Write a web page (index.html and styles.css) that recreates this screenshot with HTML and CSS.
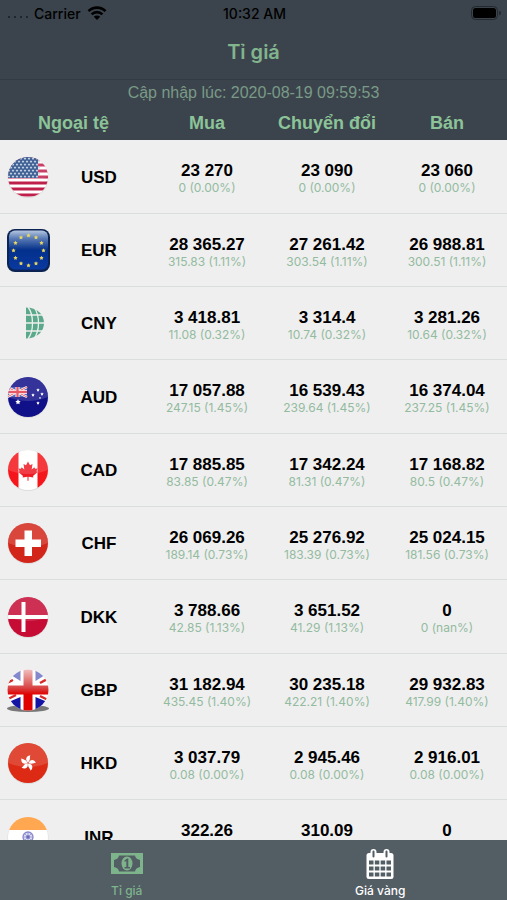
FILE: index.html
```html
<!DOCTYPE html>
<html lang="vi">
<head>
    <meta charset="UTF-8">
    <meta name="viewport" content="width=device-width, initial-scale=1">
    <title>Tỉ giá</title>
    <link rel="stylesheet" href="styles.css">
</head>
<body>

<div class="app">
    <header class="top">
        <div class="status-bar">
            <div class="carrier">
                <span class="dots"><i></i><i></i><i></i><i></i></span>
                <span>Carrier</span>
                <svg class="wifi" viewBox="0 0 20 14">
                    <path d="M1.500 5.200a12 12 0 0 1 17 0M4.600 8.400a7.600 7.600 0 0 1 10.800 0" fill="none" stroke="#000" stroke-width="2.600"/>
                    <path d="M10 14L6.800 10.800a4.600 4.600 0 0 1 6.400 0z"/>
                </svg>
            </div>
            <div class="time">10:32 AM</div>
            <svg class="battery" viewBox="0 0 30 14">
                <rect x="0.5" y="0.5" width="26" height="13" rx="4" fill="none" stroke="#23292d"/>
                <rect x="2" y="2" width="23" height="10" rx="2.500"/>
                <path d="M28 5a2 2 0 0 1 0 4z" fill="#23292d"/>
            </svg>
        </div>
        <h1>Tỉ giá</h1>
        <p class="updated">Cập nhập lúc: 2020-08-19 09:59:53</p>
    </header>

    <main>
        <table>
            <colgroup>
                <col class="col-flag">
                <col class="col-code">
                <col><col><col>
            </colgroup>
            <thead>
                <tr>
                    <th colspan="2">Ngoại tệ</th>
                    <th>Mua</th>
                    <th>Chuyển đổi</th>
                    <th>Bán</th>
                </tr>
            </thead>
            <tbody id="rates">
                <!-- Rates will be loaded here -->
            </tbody>
        </table>
    </main>

    <nav class="tabs">
        <a href="#rates" class="active">
            <svg viewBox="0 0 32 32">
                <path fill="#7eb48c" fill-rule="evenodd" d="M0 5h32v21H0zM3 7.500v16h26v-16z"/>
                <path fill="#7eb48c" d="M2 7h6q0 4-5 5H2zM30 7h-6q0 4 5 5h1zM2 24h6q0-4-5-5H2zM30 24h-6q0-4 5-5h1z"/>
                <ellipse cx="16" cy="15.500" rx="5.500" ry="7" fill="#7eb48c"/>
                <path d="M13.500 12.500l2.500-2h1.300v8.500h1.700v1.600h-5.500V19h1.800v-6l-1.800 1z" fill="#535d64"/>
            </svg>
            <span>Tỉ giá</span>
        </a>
        <a href="#gold">
            <svg viewBox="0 0 32 32">
                <rect x="2.500" y="5" width="27" height="26" rx="2.500" fill="#fff"/>
                <rect x="6.500" y="1" width="6" height="9" rx="3" fill="#fff"/>
                <rect x="19.500" y="1" width="6" height="9" rx="3" fill="#fff"/>
                <path d="M9.500 3.500v5M22.500 3.500v5" stroke="#535d64" stroke-width="2" stroke-linecap="round"/>
                <path d="M5 13.500h22M5 19.500h22M5 25.500h22" stroke="#535d64" stroke-width="4" stroke-dasharray="4.500 1.330" transform="translate(0 1)"/>
            </svg>
            <span>Giá vàng</span>
        </a>
    </nav>
</div>

<script src="script.js"></script>
</body>
</html>
```
FILE: styles.css
```css
* {
    box-sizing: border-box;
}
body {
    margin: 0;
    font-family: "Liberation Sans", Arial, sans-serif;
    background-color: #efefef;
    color: #000;
}
.app {
    display: flex;
    flex-direction: column;
    height: 100vh;
}

/* Header */
.top {
    background-color: #3b444c;
    text-align: center;
}
.status-bar {
    display: grid;
    grid-template-columns: 1fr auto 1fr;
    align-items: center;
    height: 26px;
    padding: 0 6px 0 8px;
    font-family: Inter, sans-serif;
    font-size: 14px;
    font-weight: 500;
}
.carrier {
    display: flex;
    align-items: center;
    gap: 6px;
}
.dots {
    display: flex;
    gap: 4px;
    padding-top: 8px;
}
.dots i {
    width: 2px;
    height: 2px;
    background-color: #20272c;
}
.wifi {
    width: 20px;
    height: 14px;
}
.battery {
    width: 30px;
    height: 14px;
    justify-self: end;
}
h1 {
    margin: 0;
    height: 54px;
    line-height: 52px;
    border-bottom: 1px solid #333b42;
    font-family: Inter, sans-serif;
    font-size: 20px;
    font-weight: 600;
    color: #82b48e;
}
.updated {
    margin: 0;
    line-height: 26px;
    font-size: 16px;
    color: #7a9a87;
}

/* Rates table */
main {
    flex: 1;
    min-height: 0;
    overflow-y: auto;
    scrollbar-width: none;
}
table {
    width: 100%;
    table-layout: fixed;
    border-collapse: separate;
    border-spacing: 0;
    text-align: center;
}
.col-flag {
    width: 10%;
}
.col-code {
    width: 19%;
}
th, td {
    padding: 0;
}
thead th {
    position: sticky;
    top: 0;
    z-index: 1;
    height: 34px;
    background-color: #3b444c;
    font-size: 18px;
    color: #8cc398;
}
tbody th, tbody td {
    height: 73px;
    padding-top: 5px;
    border-bottom: 1px solid #d9dddd;
}
tbody tr:nth-child(3n + 1) > * {
    height: 74px;
}
tbody th {
    padding-top: 2px;
    font-size: 17px;
}
tbody .flag {
    padding-top: 0;
}
.flag svg {
    display: block;
    width: 44px;
    height: 44px;
    margin-left: 6px;
}
.price, .change {
    display: block;
    height: 17px;
    line-height: 17px;
    white-space: nowrap;
}
.price {
    font-size: 17px;
    font-weight: bold;
}
.change {
    font-family: Inter, sans-serif;
    font-size: 12px;
    color: #93bb9f;
}

/* Bottom tabs */
.tabs {
    display: flex;
    height: 60px;
    background-color: #535d64;
}
.tabs a {
    flex: 1;
    display: flex;
    flex-direction: column;
    align-items: center;
    padding-top: 8px;
    gap: 3px;
    font-family: Inter, sans-serif;
    font-size: 12px;
    font-weight: 500;
    line-height: 16px;
    color: #fff;
    text-decoration: none;
}
.tabs a.active {
    color: #7eb48c;
}
.tabs svg {
    width: 32px;
    height: 32px;
}
```
FILE: script.js
```js
// Every flag is drawn on a 44x44 box
const round = '<circle cx="22" cy="22.500" r="20.500" fill="#ddd"/>';
const gloss = '<path d="M2 22a20 20 0 0 1 40 0q-20 8-40 0z" fill="#fff" fill-opacity=".15"/>';

function disc(id, inner) {
    return `<svg viewBox="0 0 44 44"><clipPath id="${id}"><circle cx="22" cy="22" r="20"/></clipPath>${round}<g clip-path="url(#${id})">${inner}${gloss}</g></svg>`;
}

function star(x, y, r, color) {
    let points = "";
    for (let i = 0; i < 10; i++) {
        const a = -Math.PI / 2 + i * Math.PI / 5;
        const d = i % 2 ? r * 0.5 : r;
        points += (x + d * Math.cos(a)).toFixed(2) + "," + (y + d * Math.sin(a)).toFixed(2) + " ";
    }
    return `<polygon points="${points}" fill="${color}"/>`;
}

function usFlag() {
    let s = '<rect width="44" height="44" fill="#fff"/>';
    for (let y = 2.500; y < 44; y += 6) {
        s += `<rect y="${y}" width="44" height="3" fill="#bf1f4b"/>`;
    }
    s += '<rect width="32" height="23" fill="#1d4380"/>';
    for (let row = 0; row < 7; row++) {
        for (let col = 0; col < 8; col++) {
            s += star(3 + col * 4 + (row % 2) * 2, 3.500 + row * 3, 1.500, "#c9d6e8");
        }
    }
    return disc("us", s);
}

function euFlag() {
    let s = '<defs><linearGradient id="euSky" x2="0" y2="1"><stop offset="0" stop-color="#b5c6e0"/><stop offset=".2" stop-color="#5b7cb6"/><stop offset=".45" stop-color="#123c90"/><stop offset=".5" stop-color="#03308c"/><stop offset="1" stop-color="#0a39a0"/></linearGradient></defs>';
    s += '<rect x="1" y="1" width="43" height="43" rx="8" fill="#0b2454"/><rect x="3" y="2.500" width="39" height="39" rx="6" fill="url(#euSky)"/>';
    for (let i = 0; i < 12; i++) {
        const a = i * Math.PI / 6;
        s += star(22.500 + 15 * Math.sin(a), 22.500 - 15 * Math.cos(a), 2.300, "#e9d75e");
    }
    return `<svg viewBox="0 0 44 44">${s}</svg>`;
}

function hkFlag() {
    let s = '<rect width="44" height="44" fill="#dc2a14"/>';
    for (let i = 0; i < 5; i++) {
        s += `<path d="M22 21.500c-3.500-2-3.500-6 1-7.500-.8 2 1.500 4-1 7.500z" fill="#fff" transform="rotate(${i * 72 + 10} 22 22)"/>`;
    }
    return disc("hk", s);
}

const flags = {
    USD: usFlag(),
    EUR: euFlag(),
    CNY: '<svg viewBox="0 0 44 44"><path d="M20 6.500c11 0 18 7 18 15.500s-7 15.500-18 15.500z" fill="#5aa98b"/><path d="M20 14h18M20 22h19M20 30h18M22 6c6 8 6 24 0 32M28 6c6 9 6 23 0 32" fill="none" stroke="#efefef" stroke-width="1.300"/></svg>',
    AUD: disc("au", '<rect width="44" height="44" fill="#101088"/><rect x="1" y="12" width="20" height="10" fill="#3c4aa8"/><path d="M1 12l20 10M21 12L1 22" stroke="#fff" stroke-width="2.500"/><path d="M1 12l20 10M21 12L1 22" stroke="#e44" stroke-width="1"/><path d="M11.500 12v10M1 17h20" stroke="#fff" stroke-width="4"/><path d="M11.500 12v10M1 17h20" stroke="#e23d4b" stroke-width="2.300"/>'
        + star(12, 27, 2.800, "#fff") + star(32, 15, 1.800, "#fff") + star(27, 20, 1.800, "#fff") + star(36, 19, 1.800, "#fff") + star(32, 28, 1.800, "#fff") + star(34, 23, 1.200, "#fff")),
    CAD: disc("ca", '<rect width="44" height="44" fill="#fff"/><path d="M0 0h12.500v44H0zM31.500 0H44v44H31.500z" fill="#f4161a"/><path d="M22 13.500l2 3.800 2.500-1.300-.8 5.500 2.700-2.300.6 1.600 2.500-.3-1 2.800 1.200.8-4.700 3.800.4 1.600-4.900-.7v4h-1v-4l-4.900.7.4-1.600-4.700-3.800 1.200-.8-1-2.800 2.500.3.600-1.600 2.700 2.300-.8-5.500 2.500 1.300z" fill="#ee1c25"/>'),
    CHF: disc("ch", '<rect width="44" height="44" fill="#d3261b"/><path d="M18.500 9.500h7.500v9h9V26h-9v9h-7.500v-9h-9v-7.500h9z" fill="#fff"/>'),
    DKK: disc("dk", '<rect width="44" height="44" fill="#c60c35"/><path d="M17.500 7v30M0 22h44" stroke="#fff" stroke-width="4"/>'),
    GBP: '<svg viewBox="0 0 44 44"><defs><clipPath id="gb"><circle cx="22" cy="22" r="20.500"/></clipPath><linearGradient id="gbRed" x2="0" y2="1"><stop offset="0" stop-color="#f3c8c8"/><stop offset=".45" stop-color="#d84444"/><stop offset=".6" stop-color="#e00000"/><stop offset="1" stop-color="#e00000"/></linearGradient></defs><ellipse cx="22" cy="40.500" rx="21" ry="3.500" fill="#777"/><g clip-path="url(#gb)"><rect width="44" height="44" fill="#fff"/><path d="M5 7L14.500 0v13zM39 7L29.500 0v13z" fill="#8388cc"/><path d="M5 33l9.500-4v15H5zM39 33l-9.500-4v15H39z" fill="#1414a4"/><path d="M1 15l6-3M43 10l-9 5M2 31l8-4M42 32l-8-4" stroke="#d82a2a" stroke-width="2.500"/><path d="M17.500 0h9v17.500H44v9H26.500V44h-9V26.500H0v-9h17.500z" fill="url(#gbRed)"/></g></svg>',
    HKD: hkFlag(),
    INR: disc("in", '<rect width="44" height="44" fill="#fff"/><rect width="44" height="15" fill="#ff9833"/><rect y="29" width="44" height="15" fill="#128807"/><circle cx="22" cy="22" r="5" fill="#d9d9f2" stroke="#7474c4" stroke-width="1.300"/><path d="M22 17v10M17 22h10M18.500 18.500l7 7M25.500 18.500l-7 7" stroke="#7474c4" stroke-width=".7"/><circle cx="22" cy="22" r="1.800" fill="#5050b0"/>')
};

// code, then price and change for Mua, Chuyển đổi, Bán
const rates = [
    ["USD", "23 270", "0 (0.00%)", "23 090", "0 (0.00%)", "23 060", "0 (0.00%)"],
    ["EUR", "28 365.27", "315.83 (1.11%)", "27 261.42", "303.54 (1.11%)", "26 988.81", "300.51 (1.11%)"],
    ["CNY", "3 418.81", "11.08 (0.32%)", "3 314.4", "10.74 (0.32%)", "3 281.26", "10.64 (0.32%)"],
    ["AUD", "17 057.88", "247.15 (1.45%)", "16 539.43", "239.64 (1.45%)", "16 374.04", "237.25 (1.45%)"],
    ["CAD", "17 885.85", "83.85 (0.47%)", "17 342.24", "81.31 (0.47%)", "17 168.82", "80.5 (0.47%)"],
    ["CHF", "26 069.26", "189.14 (0.73%)", "25 276.92", "183.39 (0.73%)", "25 024.15", "181.56 (0.73%)"],
    ["DKK", "3 788.66", "42.85 (1.13%)", "3 651.52", "41.29 (1.13%)", "0", "0 (nan%)"],
    ["GBP", "31 182.94", "435.45 (1.40%)", "30 235.18", "422.21 (1.40%)", "29 932.83", "417.99 (1.40%)"],
    ["HKD", "3 037.79", "0.08 (0.00%)", "2 945.46", "0.08 (0.00%)", "2 916.01", "0.08 (0.00%)"],
    ["INR", "322.26", "", "310.09", "", "0", ""]
];

function renderRates() {
    const body = document.getElementById("rates");

    for (const rate of rates) {
        const row = document.createElement("tr");
        row.innerHTML = `<td class="flag">${flags[rate[0]]}</td><th scope="row">${rate[0]}</th>`;

        for (let i = 1; i < rate.length; i += 2) {
            const cell = document.createElement("td");
            cell.innerHTML = `<span class="price">${rate[i]}</span><span class="change">${rate[i + 1]}</span>`;
            row.appendChild(cell);
        }
        body.appendChild(row);
    }
}

renderRates();
```
